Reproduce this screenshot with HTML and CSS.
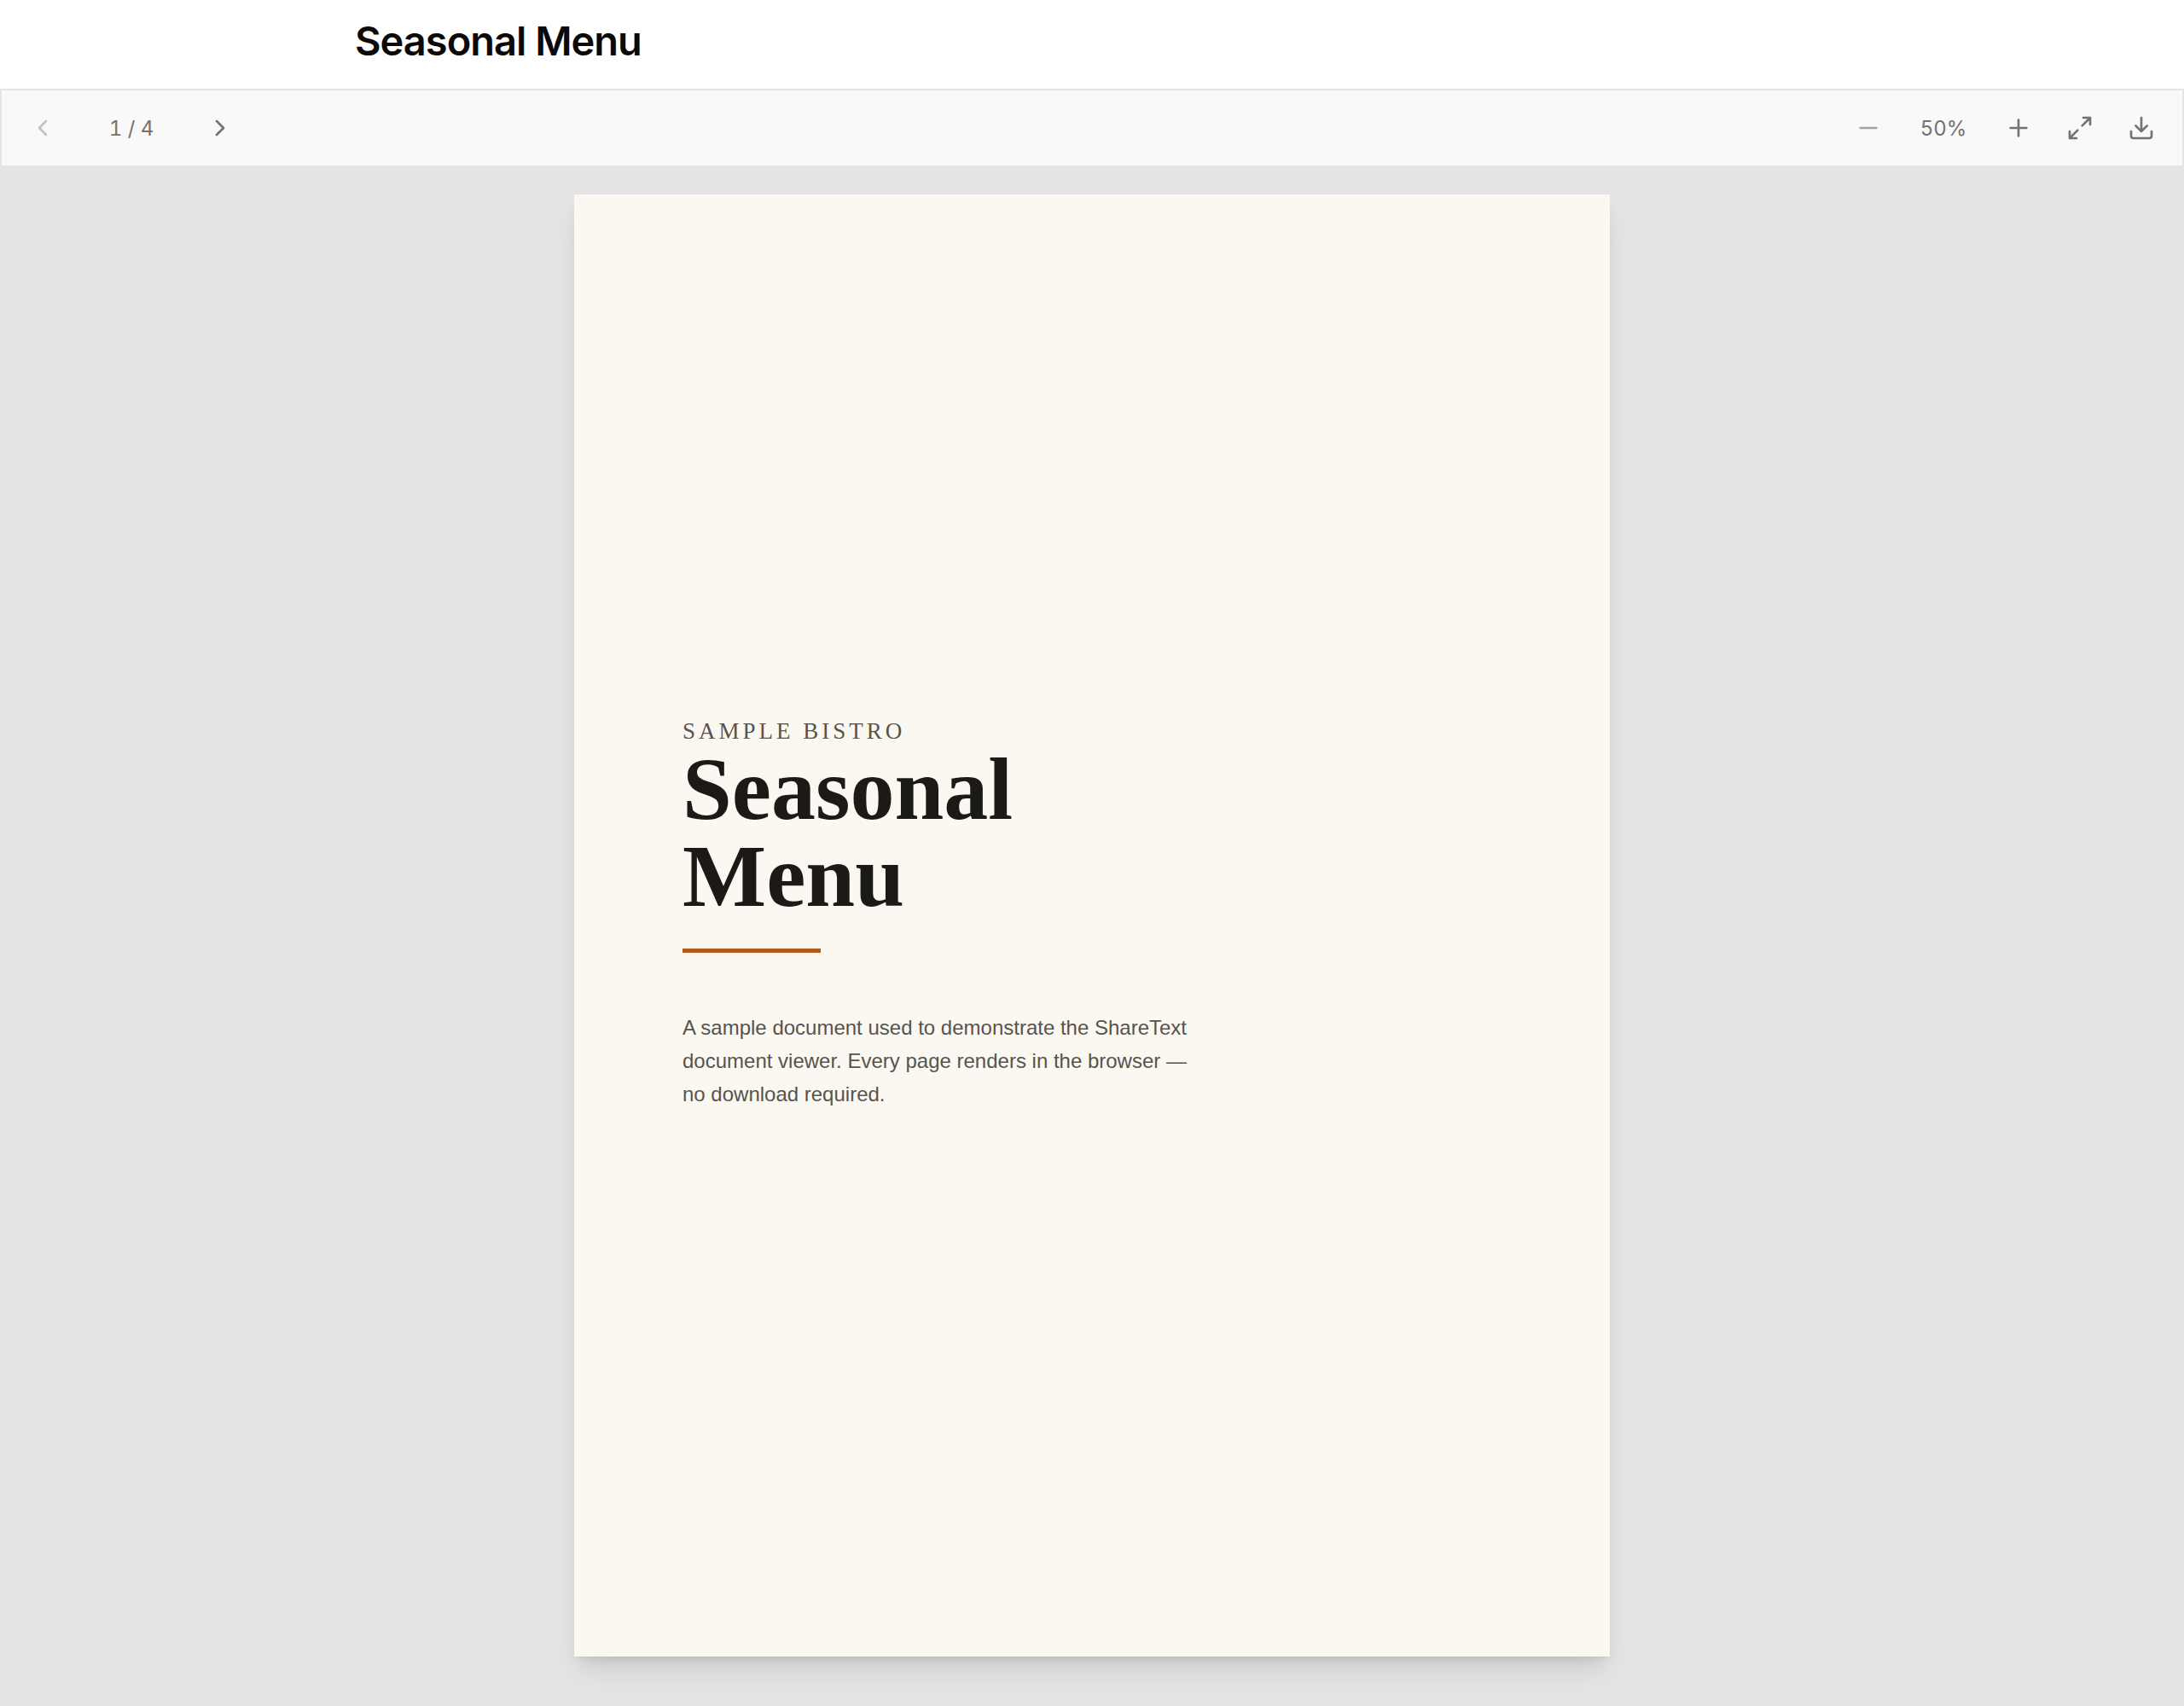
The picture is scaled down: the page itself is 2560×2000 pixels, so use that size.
FILE: index.html
```html
<!DOCTYPE html>
<html lang="en">
<head>
<meta charset="utf-8">
<meta name="viewport" content="width=device-width, initial-scale=1">
<title>Seasonal Menu</title>
<link rel="stylesheet" href="styles.css">
</head>
<body>
<header class="site-header">
  <h1 class="doc-title">Seasonal Menu</h1>
</header>
<main class="viewer">
  <div class="toolbar" role="toolbar" aria-label="Document controls">
    <div class="tool-group">
      <button class="tool" type="button" aria-label="Previous page" disabled><svg class="icon" viewBox="0 0 24 24"><path d="m15 18-6-6 6-6"/></svg></button>
      <span class="page-count">1 / 4</span>
      <button class="tool" type="button" aria-label="Next page"><svg class="icon" viewBox="0 0 24 24"><path d="m9 18 6-6-6-6"/></svg></button>
    </div>
    <div class="tool-group">
      <button class="tool tool-dim" type="button" aria-label="Zoom out"><svg class="icon" viewBox="0 0 24 24"><path d="M5 12h14"/></svg></button>
      <span class="zoom-level">50%</span>
      <button class="tool" type="button" aria-label="Zoom in"><svg class="icon" viewBox="0 0 24 24"><path d="M5 12h14M12 5v14"/></svg></button>
      <button class="tool" type="button" aria-label="Full screen"><svg class="icon" viewBox="0 0 24 24"><path d="M15 3h6v6M9 21H3v-6M21 3l-7 7M3 21l7-7"/></svg></button>
      <button class="tool" type="button" aria-label="Download"><svg class="icon" viewBox="0 0 24 24"><path d="M21 15v4a2 2 0 0 1-2 2H5a2 2 0 0 1-2-2v-4M7 10l5 5 5-5M12 15V3"/></svg></button>
    </div>
  </div>
  <div class="canvas">
    <article class="sheet">
      <p class="eyebrow">SAMPLE BISTRO</p>
      <h2 class="sheet-title">Seasonal<br>Menu</h2>
      <hr class="rule">
      <p class="intro">A sample document used to demonstrate the ShareText document viewer. Every page renders in the browser — no download required.</p>
    </article>
  </div>
</main>
</body>
</html>
```
FILE: styles.css
```css
* {
  box-sizing: border-box;
  margin: 0;
}

body {
  display: flex;
  flex-direction: column;
  min-height: 100vh;
  background: #fff;
  font-family: Inter, "Liberation Sans", sans-serif;
}

.site-header {
  width: 100%;
  max-width: 1792px;
  margin: 0 auto;
  padding: 16px 32px 24px;
}

.doc-title {
  color: #0c0a09;
  font-size: 47px;
  font-weight: 600;
  line-height: 64px;
  letter-spacing: -1px;
}

.viewer {
  display: flex;
  flex: 1;
  flex-direction: column;
  background: #e4e4e4;
}

.toolbar {
  display: flex;
  justify-content: space-between;
  padding: 12px 16px;
  border: 2px solid #e4e4e4;
  background: #f9f9f9;
}

.tool-group {
  display: flex;
  align-items: center;
  gap: 8px;
  color: #78716c;
  font-size: 24px;
  font-variant-numeric: tabular-nums;
}

.tool {
  display: flex;
  align-items: center;
  justify-content: center;
  width: 64px;
  height: 64px;
  padding: 0;
  border: 0;
  background: none;
  color: #78716c;
}

.tool:disabled {
  color: #c4c2c0;
}

.tool-dim {
  color: #a3a09d;
}

.icon {
  width: 32px;
  height: 32px;
  fill: none;
  stroke: currentColor;
  stroke-width: 2;
  stroke-linecap: round;
  stroke-linejoin: round;
}

.page-count {
  width: 128px;
  text-align: center;
}

.zoom-level {
  width: 96px;
  text-align: center;
}

.canvas {
  flex: 1;
  padding: 32px 32px 56px;
}

.sheet {
  display: flex;
  flex-direction: column;
  width: 100%;
  max-width: 1214px;
  min-height: 1714px;
  margin: 0 auto;
  padding: 612px 127px 127px;
  background: #fbf8f1;
  box-shadow: 0 20px 30px -6px rgb(0 0 0 / 10%), 0 8px 12px -6px rgb(0 0 0 / 12%);
}

.eyebrow {
  color: #57534e;
  font-family: "Liberation Serif", serif;
  font-size: 27px;
  line-height: 34px;
  letter-spacing: 4px;
}

.sheet-title {
  color: #1c1a17;
  font-family: "Liberation Serif", serif;
  font-size: 104px;
  font-weight: 700;
  line-height: 102px;
}

.rule {
  width: 162px;
  height: 5px;
  margin: 34px 0 68px;
  border: 0;
  background: #b35a14;
}

.intro {
  max-width: 616px;
  color: #57534e;
  font-family: "Liberation Sans", sans-serif;
  font-size: 24px;
  line-height: 39px;
}
```
